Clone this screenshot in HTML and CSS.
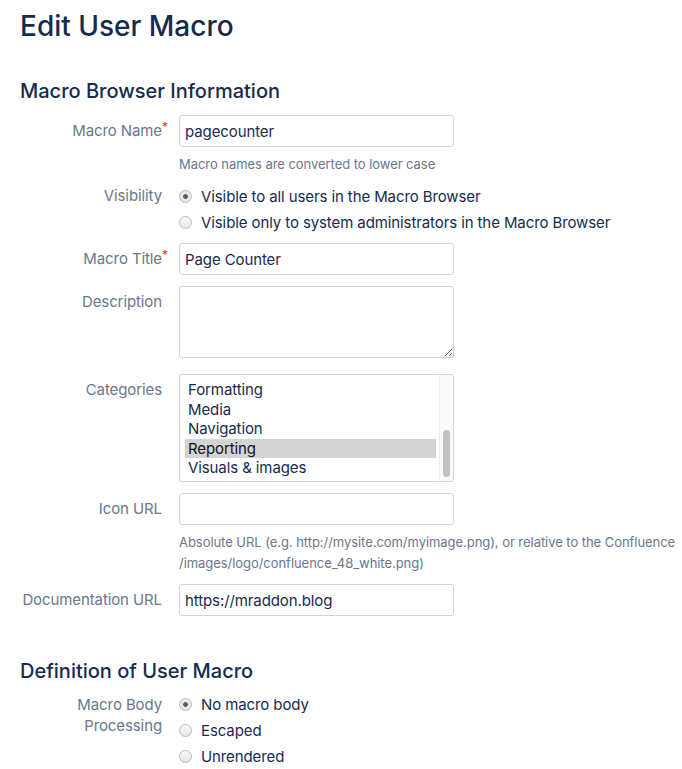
FILE: index.html
```html
<!DOCTYPE html>
<html lang="en">
<head>
    <meta charset="UTF-8">
    <meta name="viewport" content="width=device-width, initial-scale=1.0">
    <title>Edit User Macro</title>
    <link rel="stylesheet" href="styles.css">
</head>
<body>
    <div class="page">
        <h1>Edit User Macro</h1>

        <h2 class="section-title">Macro Browser Information</h2>

        <div class="field-group group-name">
            <label class="field-label" for="macro-name">Macro Name<span class="required">*</span></label>
            <div class="field">
                <input class="text" id="macro-name" type="text" value="pagecounter">
                <div class="description">Macro names are converted to lower case</div>
            </div>
        </div>

        <div class="field-group group-radios">
            <div class="field-label">Visibility</div>
            <div class="field radio-list">
                <label class="radio"><input type="radio" name="visibility" checked>Visible to all users in the Macro Browser</label>
                <label class="radio"><input type="radio" name="visibility">Visible only to system administrators in the Macro Browser</label>
            </div>
        </div>

        <div class="field-group">
            <label class="field-label" for="macro-title">Macro Title<span class="required">*</span></label>
            <div class="field">
                <input class="text" id="macro-title" type="text" value="Page Counter">
            </div>
        </div>

        <div class="field-group group-description">
            <label class="field-label" for="macro-description">Description</label>
            <div class="field">
                <textarea class="textarea" id="macro-description"></textarea>
            </div>
        </div>

        <div class="field-group">
            <div class="field-label">Categories</div>
            <div class="field">
                <div class="listbox">
                    <ul class="listbox-items">
                        <li>Formatting</li>
                        <li>Media</li>
                        <li>Navigation</li>
                        <li class="selected">Reporting</li>
                        <li>Visuals &amp; images</li>
                    </ul>
                    <div class="listbox-scroll"><div class="listbox-thumb"></div></div>
                </div>
            </div>
        </div>

        <div class="field-group group-icon">
            <label class="field-label" for="icon-url">Icon URL</label>
            <div class="field">
                <input class="text" id="icon-url" type="text" value="">
                <div class="description description-wide">Absolute URL (e.g. http://mysite.com/myimage.png), or relative to the Confluence<br>/images/logo/confluence_48_white.png)</div>
            </div>
        </div>

        <div class="field-group">
            <label class="field-label" for="doc-url">Documentation URL</label>
            <div class="field">
                <input class="text" id="doc-url" type="text" value="https://mraddon.blog">
            </div>
        </div>

        <h2 class="section-title section-second">Definition of User Macro</h2>

        <div class="field-group group-radios">
            <div class="field-label label-multiline">Macro Body<br>Processing</div>
            <div class="field radio-list">
                <label class="radio"><input type="radio" name="body" checked>No macro body</label>
                <label class="radio"><input type="radio" name="body">Escaped</label>
                <label class="radio"><input type="radio" name="body">Unrendered</label>
            </div>
        </div>
    </div>
</body>
</html>
```

FILE: styles.css
```css
html, body {
    overflow: hidden;
}
body {
    margin: 0;
    background-color: #fff;
    color: #172b4d;
    font-family: Inter, "Liberation Sans", Arial, sans-serif;
    font-size: 15px;
    letter-spacing: -0.1px;
}
.page {
    padding: 0 20px;
}
h1 {
    margin: 0;
    padding-top: 8px;
    font-size: 28px;
    font-weight: 500;
    line-height: 36px;
    letter-spacing: 0;
    color: #172b4d;
}
.section-title {
    margin: 35px 0 12px;
    font-size: 20px;
    font-weight: 500;
    line-height: 24px;
    letter-spacing: 0;
    color: #172b4d;
}
.section-second {
    margin-top: 43px;
    margin-bottom: 5px;
}
.field-group {
    display: grid;
    grid-template-columns: 142px auto;
    column-gap: 17px;
    margin-bottom: 11px;
}
.group-name, .group-radios {
    margin-bottom: 8px;
}
.group-description {
    margin-bottom: 16px;
}
.group-icon {
    margin-bottom: 10px;
}
.field-label {
    padding-top: 6px;
    line-height: 20px;
    text-align: right;
    color: #6b778c;
}
.label-multiline {
    line-height: 21px;
}
.required {
    display: inline-block;
    width: 5px;
    margin-right: -5px;
    vertical-align: top;
    font-size: 12px;
    line-height: 12px;
    color: #de350b;
}
.field {
    min-width: 0;
}
.text, .textarea {
    display: block;
    box-sizing: border-box;
    width: 275px;
    height: 32px;
    margin: 0;
    padding: 0 5px;
    border: 1px solid #d0d4da;
    border-radius: 3px;
    background: #fff;
    font-family: inherit;
    font-size: 15px;
    letter-spacing: -0.1px;
    color: #172b4d;
}
.textarea {
    height: 72px;
    padding: 4px 5px;
}
.description {
    margin-top: 9px;
    font-size: 13px;
    line-height: 16px;
    letter-spacing: -0.05px;
    color: #6b778c;
}
.description-wide {
    margin-top: 7px;
    line-height: 21px;
    white-space: nowrap;
}
.radio-list {
    padding-top: 3px;
}
.radio {
    display: flex;
    align-items: center;
    height: 26px;
    color: #172b4d;
    white-space: nowrap;
}
.radio input {
    appearance: none;
    box-sizing: border-box;
    width: 13px;
    height: 13px;
    margin: 0 9px 0 0;
    border: 1px solid #bcbcbc;
    border-radius: 50%;
    background: linear-gradient(#fafafa, #e6e6e6);
}
.radio input:checked {
    background: radial-gradient(circle, #5c5c5c 0, #5c5c5c 2px, #e4e4e4 2.6px, #f0f0f0 100%);
}
.listbox {
    display: flex;
    box-sizing: border-box;
    width: 275px;
    height: 108px;
    border: 1px solid #d0d4da;
    border-radius: 3px;
    overflow: hidden;
}
.listbox-items {
    flex: 1;
    margin: 0;
    padding: 5px 0 0 5px;
    list-style: none;
    line-height: 19.6px;
    color: #172b4d;
}
.listbox-items li {
    padding-left: 3px;
}
.listbox-items .selected {
    background-color: #d4d4d4;
    color: #111;
}
.listbox-scroll {
    position: relative;
    width: 13px;
    margin-left: 3px;
    border-left: 1px solid #ededed;
    background: #fafafa;
}
.listbox-thumb {
    position: absolute;
    top: 55px;
    left: 3px;
    width: 7px;
    height: 47px;
    border-radius: 4px;
    background: #c2c2c2;
}
```
